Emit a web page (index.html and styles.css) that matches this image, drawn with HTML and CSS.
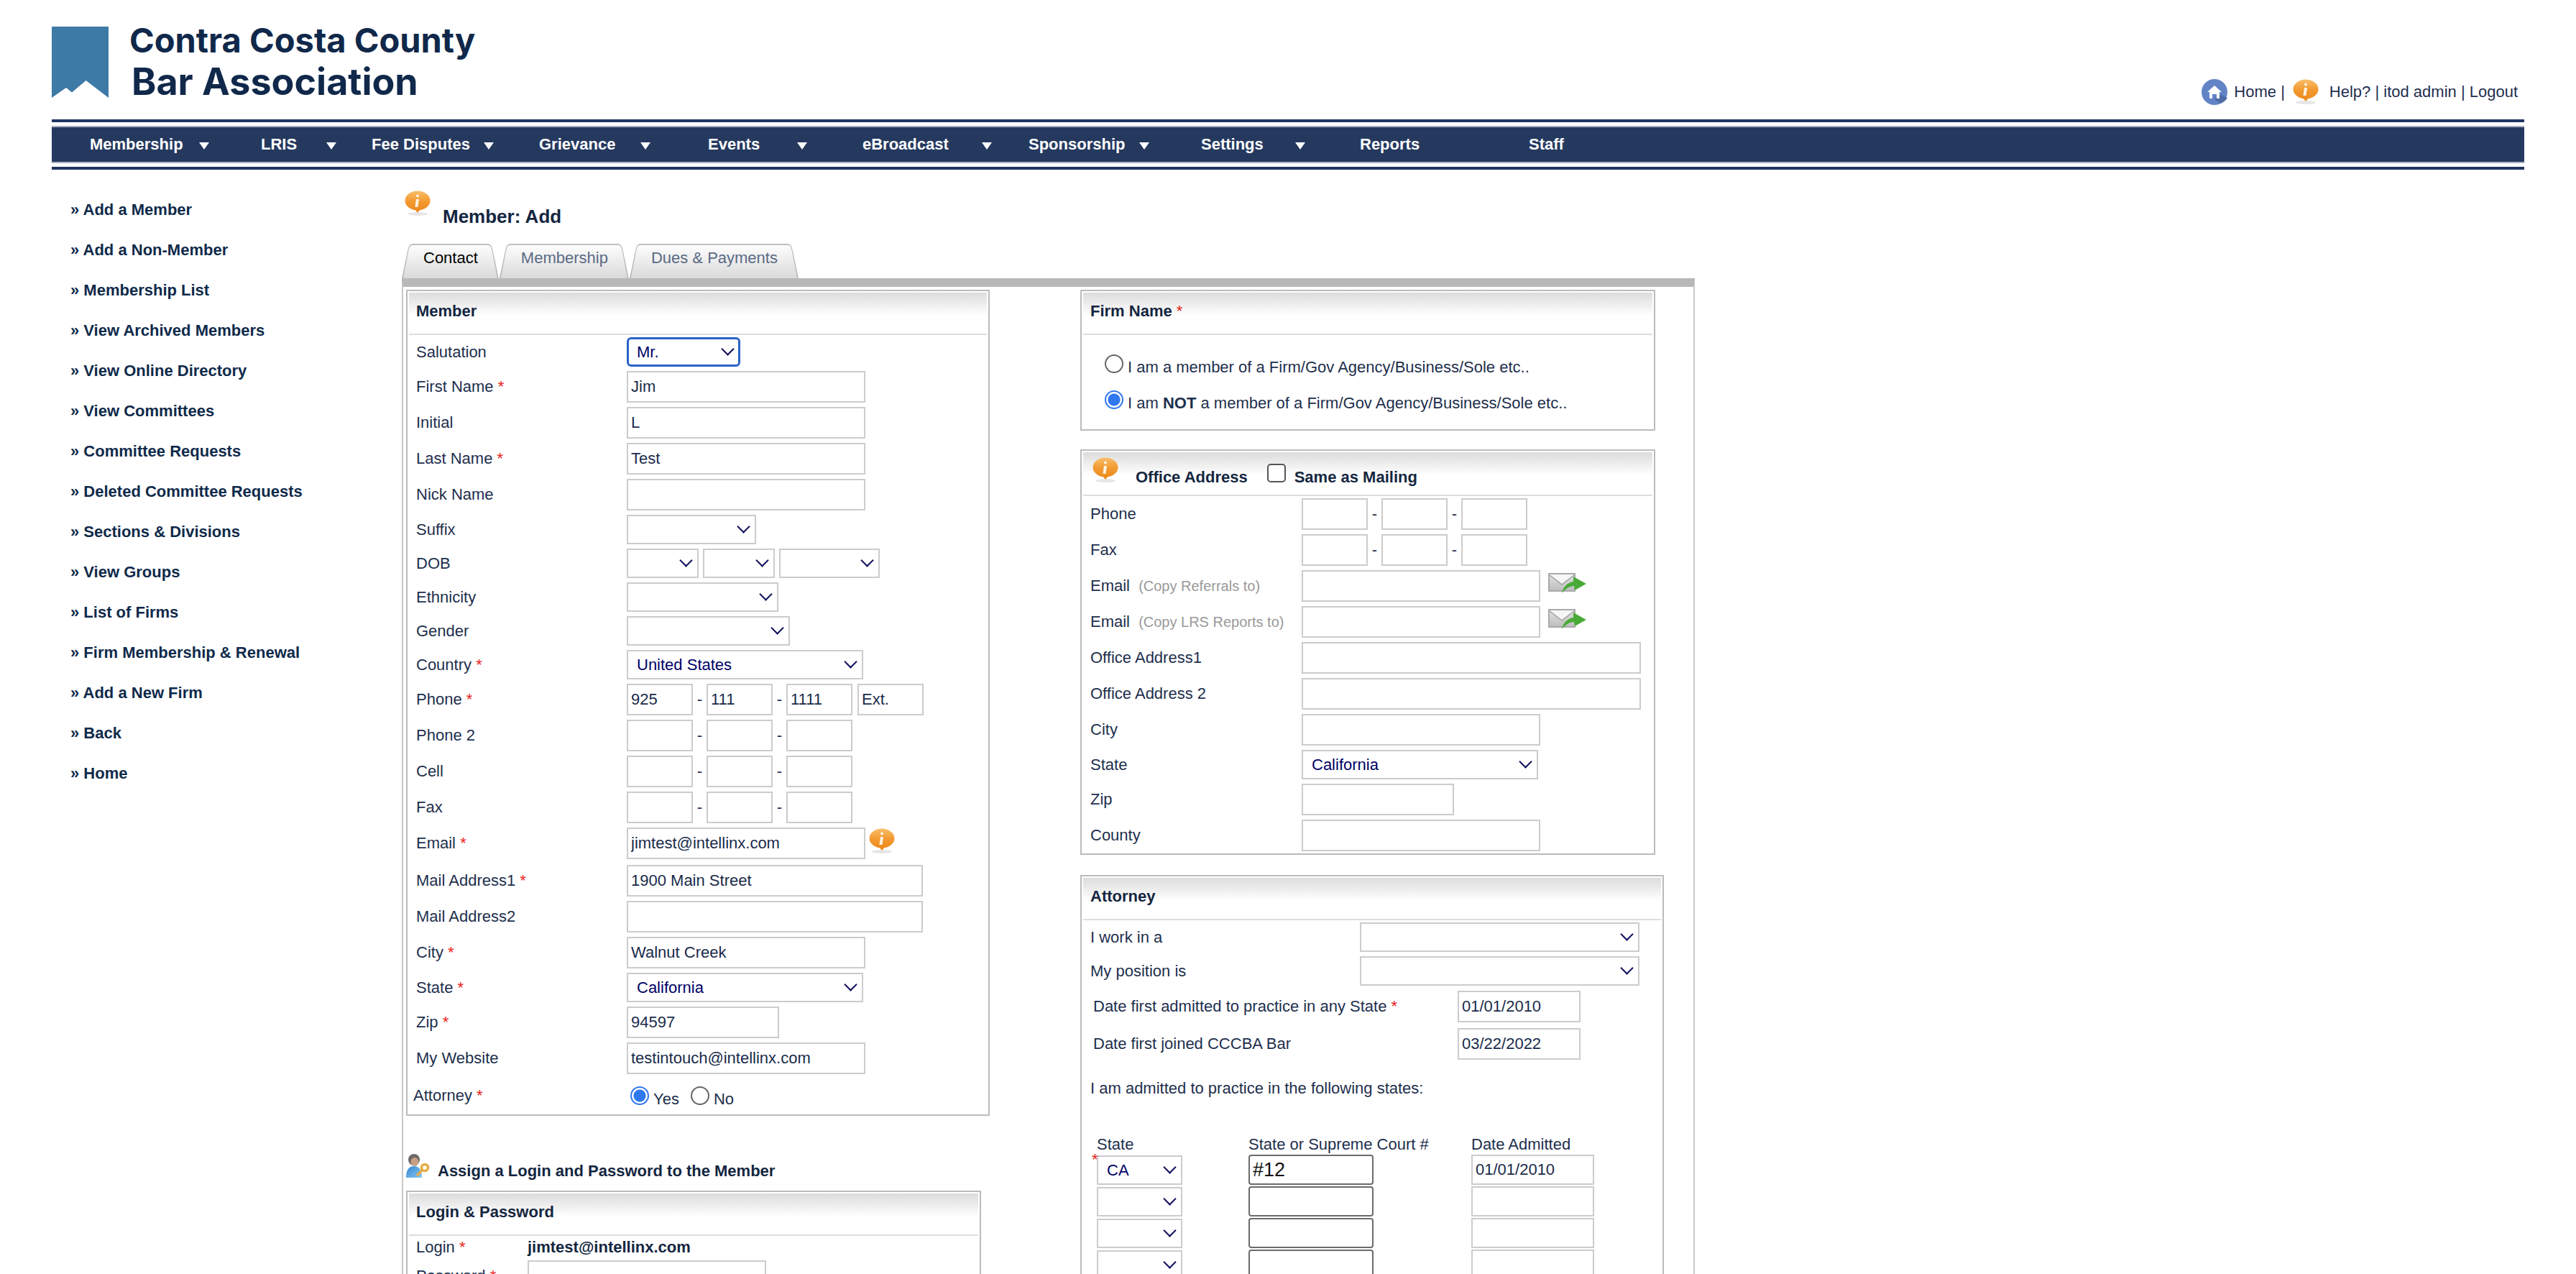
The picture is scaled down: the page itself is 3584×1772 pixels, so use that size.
FILE: index.html
```html
<!DOCTYPE html>
<html lang="en">
<head>
  <meta charset="UTF-8" />
  <meta name="viewport" content="width=device-width, initial-scale=1.0"/>
  <title>Member: Add</title>
  <link rel="stylesheet" href="styles.css">
</head>
<body>
  <svg class="defs" width="0" height="0">
    <defs>
      <linearGradient id="bubble" x1="0" y1="0" x2="0" y2="1">
        <stop offset="0" stop-color="#f8bf6c"/>
        <stop offset="0.5" stop-color="#f39c34"/>
        <stop offset="1" stop-color="#ee8a1e"/>
      </linearGradient>
      <linearGradient id="envelope" x1="0" y1="0" x2="0" y2="1">
        <stop offset="0" stop-color="#e4e4e4"/>
        <stop offset="1" stop-color="#bcbcbc"/>
      </linearGradient>
      <linearGradient id="shirt" x1="0" y1="0" x2="1" y2="1">
        <stop offset="0" stop-color="#2f86d8"/>
        <stop offset="1" stop-color="#8cc6ee"/>
      </linearGradient>
      <symbol id="icon-info" viewBox="0 0 36 36">
        <ellipse cx="18" cy="32.5" rx="14" ry="2.5" fill="#e6e6e6"/>
        <ellipse cx="18" cy="14" rx="17.5" ry="13.5" fill="url(#bubble)"/>
        <path d="M14 26 L18 31 L22 26 Z" fill="#ee8a1e"/>
        <circle cx="18" cy="7.5" r="2" fill="#fdf3e2"/>
        <path d="M16 12 L20 12 L18.4 23 L14.4 23 Z" fill="#fdf3e2"/>
      </symbol>
      <symbol id="icon-mail" viewBox="0 0 53 28">
        <rect x="1" y="1" width="36" height="24" fill="url(#envelope)" stroke="#aaa" stroke-width="2"/>
        <path d="M2 2 L19 15 L36 2 Z" fill="#f6f6f6"/>
        <path d="M2 3 L19 16 L36 3" fill="none" stroke="#a4a4a4" stroke-width="1.5"/>
        <path d="M19 28 C21 19 27 13 35 12 L35 5 L53 15 L37 24 L36 18 C30 18 24 22 19 28 Z" fill="#49ab37"/>
      </symbol>
    </defs>
  </svg>

  <header class="top">
    <div class="logo">
      <svg class="logo-mark" viewBox="0 0 79 99"><path d="M0 0H79V99L47.6 75 28 91.6 20 85 0 99Z" fill="#3d7aa6"/></svg>
      <div class="logo-text">
        <span class="logo-line1">Contra Costa County</span>
        <span class="logo-line2">Bar Association</span>
      </div>
    </div>
    <div class="user-links">
      <svg class="icon-home" viewBox="0 0 36 36">
        <circle cx="18" cy="18" r="18" fill="#6284c6"/>
        <path d="M24 21 L36 26 A18 18 0 0 1 26 34 L18 28 Z" fill="#4f6ca8"/>
        <path d="M18 9 L28 18 L25 18 L25 27 L21 27 L21 21 L15 21 L15 27 L11 27 L11 18 L8 18 Z" fill="#fff"/>
      </svg>
      <span>Home |</span>
      <svg class="icon-help"><use href="#icon-info"/></svg>
      <span class="help-text">Help? | itod admin | Logout</span>
    </div>
  </header>

  <div class="nav-frame">
    <nav class="nav">
      <a>Membership</a><i class="nav-arrow"></i>
      <a>LRIS</a><i class="nav-arrow"></i>
      <a>Fee Disputes</a><i class="nav-arrow"></i>
      <a>Grievance</a><i class="nav-arrow"></i>
      <a>Events</a><i class="nav-arrow"></i>
      <a>eBroadcast</a><i class="nav-arrow"></i>
      <a>Sponsorship</a><i class="nav-arrow"></i>
      <a>Settings</a><i class="nav-arrow"></i>
      <a>Reports</a>
      <a>Staff</a>
    </nav>
  </div>

  <div class="layout">
    <ul class="side">
      <li>» Add a Member</li>
      <li>» Add a Non-Member</li>
      <li>» Membership List</li>
      <li>» View Archived Members</li>
      <li>» View Online Directory</li>
      <li>» View Committees</li>
      <li>» Committee Requests</li>
      <li>» Deleted Committee Requests</li>
      <li>» Sections &amp; Divisions</li>
      <li>» View Groups</li>
      <li>» List of Firms</li>
      <li>» Firm Membership &amp; Renewal</li>
      <li>» Add a New Firm</li>
      <li>» Back</li>
      <li>» Home</li>
    </ul>

    <main class="main">
      <div class="page-title">
        <svg class="icon-info"><use href="#icon-info"/></svg>
        <h1>Member: Add</h1>
      </div>

      <div class="tabs">
        <div class="tab active"><span>Contact</span></div>
        <div class="tab"><span>Membership</span></div>
        <div class="tab"><span>Dues &amp; Payments</span></div>
      </div>

      <div class="tab-body">
        <div class="col">
          <section class="panel panel-member">
            <h2 class="panel-head">Member</h2>
            <div class="row"><label>Salutation</label><span class="select w158 focused"><select><option>Mr.</option></select></span></div>
            <div class="row"><label>First Name <b class="req">*</b></label><input class="w332" value="Jim"></div>
            <div class="row"><label>Initial</label><input class="w332" value="L"></div>
            <div class="row"><label>Last Name <b class="req">*</b></label><input class="w332" value="Test"></div>
            <div class="row"><label>Nick Name</label><input class="w332"></div>
            <div class="row"><label>Suffix</label><span class="select w180"><select><option></option></select></span></div>
            <div class="row"><label>DOB</label>
              <div class="group">
                <span class="select w100"><select><option></option></select></span>
                <span class="select w100"><select><option></option></select></span>
                <span class="select w140"><select><option></option></select></span>
              </div>
            </div>
            <div class="row"><label>Ethnicity</label><span class="select w211"><select><option></option></select></span></div>
            <div class="row"><label>Gender</label><span class="select w227"><select><option></option></select></span></div>
            <div class="row"><label>Country <b class="req">*</b></label><span class="select w329"><select><option>United States</option></select></span></div>
            <div class="row"><label>Phone <b class="req">*</b></label>
              <div class="phone"><input class="w92" value="925"><span class="dash">-</span><input class="w92" value="111"><span class="dash">-</span><input class="w92" value="1111"><input class="w92 ext" value="Ext."></div>
            </div>
            <div class="row"><label>Phone 2</label>
              <div class="phone"><input class="w92"><span class="dash">-</span><input class="w92"><span class="dash">-</span><input class="w92"></div>
            </div>
            <div class="row"><label>Cell</label>
              <div class="phone"><input class="w92"><span class="dash">-</span><input class="w92"><span class="dash">-</span><input class="w92"></div>
            </div>
            <div class="row"><label>Fax</label>
              <div class="phone"><input class="w92"><span class="dash">-</span><input class="w92"><span class="dash">-</span><input class="w92"></div>
            </div>
            <div class="row row-email"><label>Email <b class="req">*</b></label>
              <div class="with-icon"><input class="w332" value="jimtest@intellinx.com"><svg class="icon-info icon-email"><use href="#icon-info"/></svg></div>
            </div>
            <div class="row"><label>Mail Address1 <b class="req">*</b></label><input class="w412" value="1900 Main Street"></div>
            <div class="row"><label>Mail Address2</label><input class="w412"></div>
            <div class="row"><label>City <b class="req">*</b></label><input class="w332" value="Walnut Creek"></div>
            <div class="row"><label>State <b class="req">*</b></label><span class="select w329"><select><option>California</option></select></span></div>
            <div class="row"><label>Zip <b class="req">*</b></label><input class="w212" value="94597"></div>
            <div class="row"><label>My Website</label><input class="w332" value="testintouch@intellinx.com"></div>
            <div class="row row-radio"><label class="label-out">Attorney <b class="req">*</b></label>
              <div class="radios">
                <input type="radio" name="attorney" checked><span>Yes</span>
                <input type="radio" name="attorney"><span>No</span>
              </div>
            </div>
          </section>

          <div class="assign">
            <svg class="icon-user" viewBox="0 0 33 34">
              <path d="M0 34 C0 23 4 18 11 18 C18 18 22 23 22 34 Z" fill="url(#shirt)"/>
              <circle cx="11" cy="9" r="8" fill="#6d6a68"/>
              <ellipse cx="12" cy="12" rx="5.5" ry="6" fill="#c79f86"/>
              <circle cx="26" cy="20" r="4.5" fill="none" stroke="#e5ad45" stroke-width="3.5"/>
              <path d="M23 23 L15 31" stroke="#e5ad45" stroke-width="3.5"/>
            </svg>
            <h3>Assign a Login and Password to the Member</h3>
          </div>

          <section class="panel panel-login">
            <h2 class="panel-head">Login &amp; Password</h2>
            <div class="row row-login"><label>Login <b class="req">*</b></label><strong>jimtest@intellinx.com</strong></div>
            <div class="row row-login"><label>Password <b class="req">*</b></label><input class="w332"></div>
          </section>
        </div>

        <div class="col">
          <section class="panel panel-firm">
            <h2 class="panel-head">Firm Name <b class="req">*</b></h2>
            <div class="firm-body">
              <div class="firm-row"><input type="radio" name="firm"><span>I am a member of a Firm/Gov Agency/Business/Sole etc..</span></div>
              <div class="firm-row"><input type="radio" name="firm" checked><span>I am <b>NOT</b> a member of a Firm/Gov Agency/Business/Sole etc..</span></div>
            </div>
          </section>

          <section class="panel panel-firm panel-office">
            <h2 class="panel-head office-head">
              <svg class="icon-info"><use href="#icon-info"/></svg>
              <span class="office-title">Office Address</span>
              <input type="checkbox">
              <span>Same as Mailing</span>
            </h2>
            <div class="row row-office"><label>Phone</label>
              <div class="phone"><input class="w92"><span class="dash">-</span><input class="w92"><span class="dash">-</span><input class="w92"></div>
            </div>
            <div class="row row-office"><label>Fax</label>
              <div class="phone"><input class="w92"><span class="dash">-</span><input class="w92"><span class="dash">-</span><input class="w92"></div>
            </div>
            <div class="row row-office"><label>Email <small>(Copy Referrals to)</small></label>
              <div class="with-icon"><input class="w332"><svg class="icon-mail"><use href="#icon-mail"/></svg></div>
            </div>
            <div class="row row-office"><label>Email <small>(Copy LRS Reports to)</small></label>
              <div class="with-icon"><input class="w332"><svg class="icon-mail"><use href="#icon-mail"/></svg></div>
            </div>
            <div class="row row-office"><label>Office Address1</label><input class="w472"></div>
            <div class="row row-office"><label>Office Address 2</label><input class="w472"></div>
            <div class="row row-office"><label>City</label><input class="w332"></div>
            <div class="row row-office"><label>State</label><span class="select w329"><select><option>California</option></select></span></div>
            <div class="row row-office"><label>Zip</label><input class="w212"></div>
            <div class="row row-office"><label>County</label><input class="w332"></div>
          </section>

          <section class="panel panel-attorney">
            <h2 class="panel-head">Attorney</h2>
            <div class="row row-work"><label>I work in a</label><span class="select w389"><select><option></option></select></span></div>
            <div class="row row-work"><label>My position is</label><span class="select w389"><select><option></option></select></span></div>
            <div class="row row-date"><label>Date first admitted to practice in any State <b class="req">*</b></label><input class="w171" value="01/01/2010"></div>
            <div class="row row-date"><label>Date first joined CCCBA Bar</label><input class="w171" value="03/22/2022"></div>
            <p class="admitted">I am admitted to practice in the following states:</p>
            <div class="states">
              <span class="states-head">State</span>
              <span class="states-head">State or Supreme Court #</span>
              <span class="states-head">Date Admitted</span>

              <span class="select w119 state-first"><select><option>CA</option></select><b class="req req-state">*</b></span>
              <input class="court" value="#12">
              <input class="w171 date-state" value="01/01/2010">

              <span class="select w119"><select><option></option></select></span>
              <input class="court">
              <input class="w171 date-state">

              <span class="select w119"><select><option></option></select></span>
              <input class="court">
              <input class="w171 date-state">

              <span class="select w119"><select><option></option></select></span>
              <input class="court">
              <input class="w171 date-state">
            </div>
          </section>
        </div>
      </div>
    </main>
  </div>
</body>
</html>
```

FILE: styles.css
```css
html, body { height: 100%; overflow: hidden; }
body { margin: 0; padding: 0 72px; background: #fff; color: #1e2f4d; font: 22px/26px "Liberation Sans", Arial, sans-serif; }
.defs { position: absolute; }

/* header */
.top { height: 166px; box-sizing: border-box; padding: 37px 9px 20px 0; display: flex; justify-content: space-between; align-items: flex-end; }
.logo { align-self: flex-start; display: flex; gap: 29px; }
.logo-mark { width: 79px; height: 99px; display: block; }
.logo-text { display: flex; flex-direction: column; color: #10284a; font-family: Inter, "Liberation Sans", sans-serif; font-weight: 700; }
.logo-line1 { font-size: 47px; line-height: 44px; margin-top: -3px; white-space: nowrap; }
.logo-line2 { font-size: 52px; line-height: 62px; margin: 5px 0 0 3px; white-space: nowrap; }
.user-links { display: flex; align-items: center; color: #1f2f4f; }
.icon-home { width: 36px; height: 36px; margin-right: 9px; }
.icon-help { width: 36px; height: 36px; margin: 0 15px 0 11px; }

/* nav */
.nav-frame { border-top: 4px solid #1f3461; border-bottom: 4px solid #1f3461; padding: 5px 0; }
.nav { height: 48px; border-top: 2px solid #a9b1c2; border-bottom: 2px solid #a9b1c2; background: #25395f; padding-left: 53px; display: grid; align-items: center; color: #fff; font-weight: bold; grid-template-columns: 152px 86px 91px 63px 156px 77px 141px 94px 124px 91px 166px 65px 154px 86px 131px 90px 235px auto; }
.nav-arrow { width: 0; height: 0; margin-top: 3px; border-left: 7px solid transparent; border-right: 7px solid transparent; border-top: 10px solid #fff; }

.layout { display: flex; align-items: flex-start; }

/* left links */
.side { width: 487px; flex: none; box-sizing: border-box; list-style: none; margin: 0; padding: 28px 0 0 26px; color: #0f2a4a; font-weight: bold; }
.side li { height: 56px; line-height: 56px; }

/* title + tabs */
.main { width: 1799px; flex: none; }
.page-title { height: 72px; box-sizing: border-box; padding: 29px 0 0 4px; display: flex; gap: 17px; }
.page-title h1 { margin: 21px 0 0; color: #14263f; font-size: 26px; line-height: 30px; }
.icon-info { width: 36px; height: 36px; flex: none; }
.tabs { margin-top: 31px; height: 48px; display: flex; gap: 1px; }
.tab { position: relative; padding: 0 29px 0 30px; line-height: 40px; color: #5a6a85; background: #bdbdbd; clip-path: polygon(0 100%, 8px 10px, 10px 3px, 14px 0, calc(100% - 14px) 0, calc(100% - 10px) 3px, calc(100% - 8px) 10px, 100% 100%); }
.tab::before { content: ""; position: absolute; inset: 2px 2px 0; background: linear-gradient(#fdfdfd, #dadada); clip-path: polygon(0 100%, 7px 9px, 9px 2px, 12px 0, calc(100% - 12px) 0, calc(100% - 9px) 2px, calc(100% - 7px) 9px, 100% 100%); }
.tab span { position: relative; }
.tab.active { color: #000; }
.tab-body { border-top: 12px solid #b8b8b8; border-left: 2px solid #c8c8c8; border-right: 2px solid #c8c8c8; padding: 4px 0 0 4px; display: grid; grid-template-columns: 938px 1fr; }

/* panels */
.panel { border: 2px solid #bbb; padding: 2px 2px 0; box-sizing: border-box; }
.panel-member { width: 812px; padding-bottom: 1px; }
.panel-login { width: 800px; }
.panel-firm { width: 800px; }
.panel-office { margin-top: 26px; }
.panel-attorney { width: 812px; margin-top: 28px; }
.panel-head { margin: 0; height: 59px; box-sizing: border-box; padding: 13px 0 0 10px; font-size: 22px; line-height: 26px; color: #14263f; border-bottom: 2px solid #ddd; background: linear-gradient(#dcdcdc, #fff 32px); }
.req { color: #e8231a; font-weight: normal; }
.row { display: grid; grid-template-columns: 293px auto; justify-content: start; align-items: center; padding: 3px 0 3px 10px; }
.row-office { grid-template-columns: 294px auto; }
.row label { white-space: nowrap; }
.row small { margin-left: 6px; font-size: 20px; color: #999; }
.row-email { padding-bottom: 5px; }
.row-radio { padding-top: 5px; }
.label-out { margin-left: -4px; }

/* controls */
input { box-sizing: border-box; height: 44px; margin: 0; padding: 0 4px; border: 2px solid #ccc; border-radius: 0; outline: none; background: #fff; color: #1a2b4a; font: 22px "Liberation Sans", Arial, sans-serif; }
.select { position: relative; display: block; }
.select select { display: block; width: 100%; height: 41px; margin: 0; padding: 0 30px 0 12px; border: 2px solid #ccc; border-radius: 0; outline: none; background: #fff; color: #000066; font: 22px "Liberation Sans", Arial, sans-serif; appearance: none; }
.select::after { content: ""; position: absolute; top: 10px; right: 11px; width: 11px; height: 11px; border-right: 2px solid #10105e; border-bottom: 2px solid #10105e; transform: rotate(45deg); pointer-events: none; }
.focused select { border: 3px solid #2a62c9; border-radius: 6px; padding-left: 11px; }
.w92 { width: 92px; }
.w100 { width: 100px; }
.w119 { width: 119px; }
.w140 { width: 140px; }
.w158 { width: 158px; }
.w171 { width: 171px; }
.w180 { width: 180px; }
.w211 { width: 211px; }
.w212 { width: 212px; }
.w227 { width: 227px; }
.w329 { width: 329px; }
.w332 { width: 332px; }
.w389 { width: 389px; }
.w412 { width: 412px; }
.w472 { width: 472px; }
.group { display: flex; gap: 6px; }
.phone { display: flex; align-items: center; }
.dash { width: 19px; text-align: center; }
.ext { margin-left: 7px; }
.with-icon { display: flex; align-items: flex-start; }
.icon-email { margin: 1px 0 0 5px; }
.icon-mail { width: 53px; height: 28px; margin: 4px 0 0 11px; }
.radios { display: flex; align-items: flex-start; box-sizing: border-box; padding: 9px 0 0 5px; height: 44px; }
input[type="radio"] { width: 26px; height: 26px; flex: none; padding: 0; border: 2px solid #666; border-radius: 50%; appearance: none; background: #fff; }
input[type="radio"]:checked { border-color: #2f78f0; background: radial-gradient(circle, #2f78f0 0 8px, #fff 9px); }
input[type="checkbox"] { width: 26px; height: 26px; flex: none; padding: 0; border: 2px solid #555; border-radius: 5px; appearance: none; background: #fff; }
.radios span { margin: 5px 16px 0 6px; }
.radios span:last-child { margin-right: 0; }

/* login */
.assign { display: flex; gap: 11px; margin-top: 52px; height: 52px; }
.icon-user { width: 33px; height: 34px; flex: none; }
.assign h3 { margin: 12px 0 0; font-size: 22px; line-height: 26px; color: #14263f; }
.row-login { grid-template-columns: 155px auto; padding: 3px 0 2px 10px; }
.row-login strong { color: #14263f; }

/* firm */
.firm-body { padding: 15px 0 16px 30px; }
.firm-row { display: flex; height: 50px; gap: 6px; }
.firm-row input { margin-top: 12px; }
.firm-row span { margin-top: 17px; }
.office-head { display: flex; height: 61px; padding: 7px 0 0 13px; }
.office-head .icon-info { margin-right: 24px; }
.office-head span { margin-top: 15px; }
.office-title { margin-right: 27px; }
.office-head input { margin: 9px 12px 0 0; }

/* attorney */
.row-work { grid-template-columns: 375px auto; }
.row-date { grid-template-columns: 507px auto; padding: 4px 0 4px 14px; }
.admitted { margin: 23px 0 0 10px; }
.states { display: grid; grid-template-columns: 211px 310px auto; grid-template-rows: 26px; grid-auto-rows: 42px; row-gap: 2px; align-items: center; justify-content: start; margin: 51px 0 0 19px; }
.states-head { height: 26px; line-height: 28px; white-space: nowrap; }
.state-first { position: relative; }
.req-state { position: absolute; left: -7px; top: -7px; }
.court { width: 174px; height: 42px; border-color: #6b6b6b; border-radius: 4px; color: #111; font-size: 27px; }
.date-state { height: 42px; }
```
